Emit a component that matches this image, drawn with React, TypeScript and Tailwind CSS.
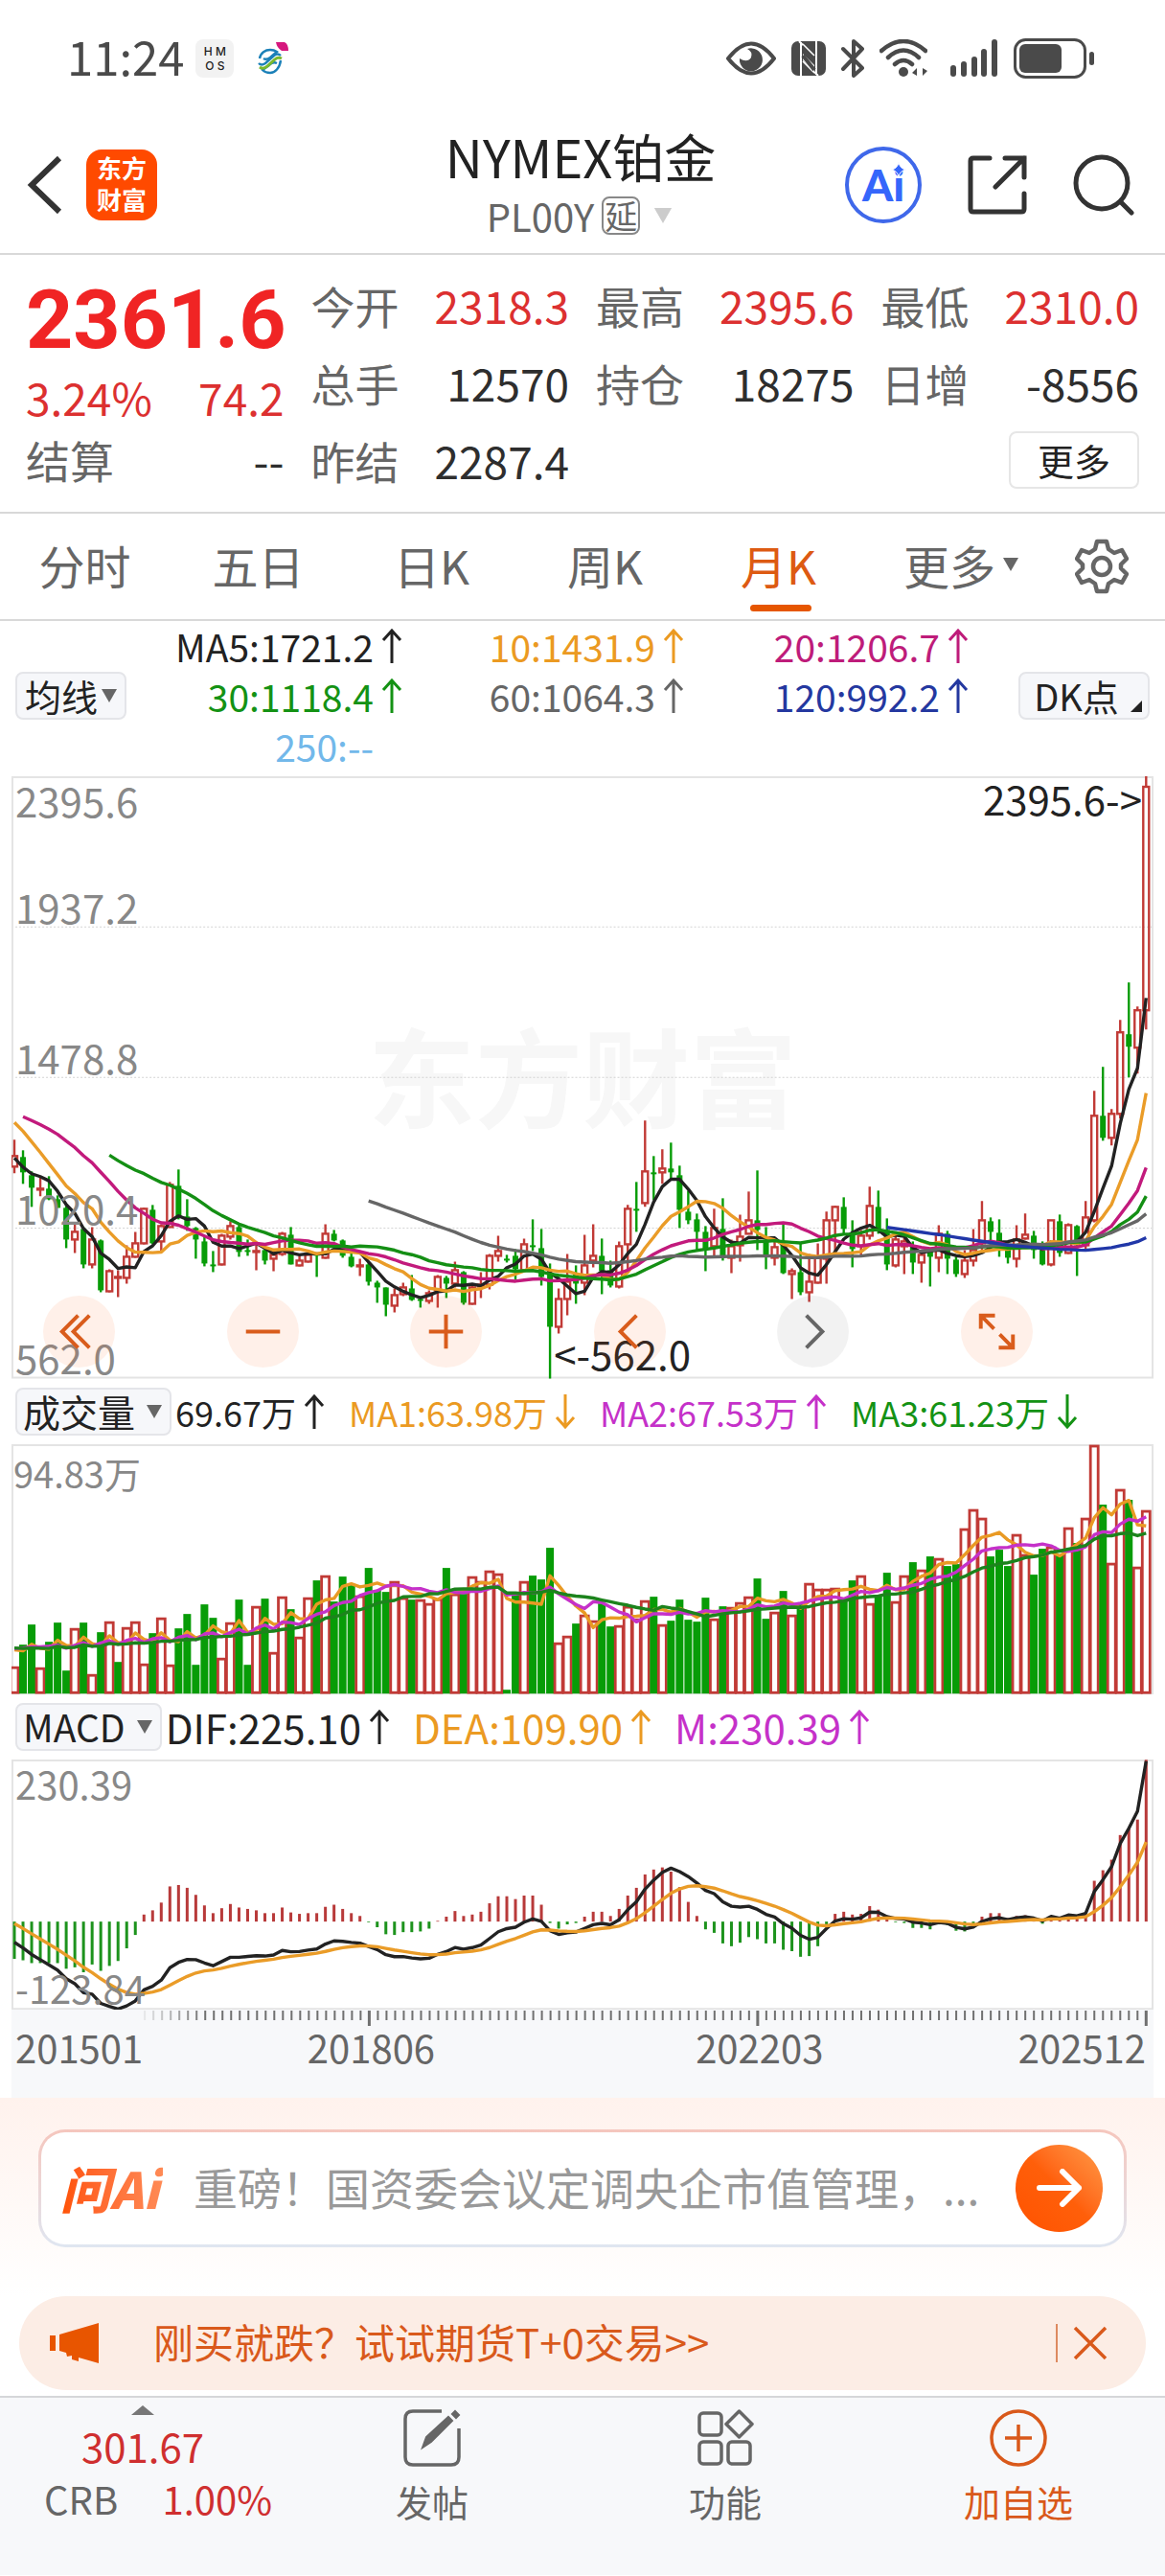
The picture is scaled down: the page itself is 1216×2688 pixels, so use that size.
import { ReactNode } from 'react';

type Candle = [high: number, top: number, bottom: number, low: number, kind: 'r' | 'g'];

const RED = '#c13a36';
const GREEN = '#079c07';

const STEP = 9.01;
const CHART_WIDTH = 1191;
const xAt = (i: number) => 3 + i * STEP;

// one candle per month, 201501 - 202512, in chart units from the top edge
const candles: Candle[] = [
  [379, 396, 407, 414, 'r'], [390, 397, 413, 425, 'g'], [412, 416, 429, 449, 'g'], [417, 430, 431, 438, 'r'],
  [417, 430, 441, 442, 'g'], [437, 441, 450, 450, 'g'], [448, 450, 483, 492, 'g'], [466, 475, 483, 497, 'r'],
  [470, 472, 509, 513, 'g'], [470, 483, 509, 513, 'r'], [483, 484, 536, 538, 'g'], [514, 516, 537, 538, 'r'],
  [515, 522, 523, 543, 'r'], [489, 501, 523, 529, 'r'], [475, 487, 501, 502, 'r'], [450, 451, 487, 488, 'r'],
  [447, 452, 487, 488, 'g'], [467, 469, 485, 495, 'r'], [423, 426, 470, 470, 'r'], [410, 427, 459, 462, 'g'],
  [441, 459, 469, 474, 'g'], [470, 471, 483, 503, 'g'], [480, 485, 508, 511, 'g'], [495, 509, 510, 517, 'g'],
  [477, 479, 509, 510, 'r'], [464, 469, 480, 483, 'r'], [468, 470, 496, 501, 'g'], [483, 494, 495, 500, 'g'],
  [487, 495, 496, 515, 'r'], [493, 494, 505, 509, 'g'], [495, 499, 503, 516, 'r'], [475, 477, 498, 500, 'r'],
  [470, 478, 509, 509, 'g'], [500, 505, 510, 511, 'r'], [498, 499, 506, 507, 'r'], [497, 498, 500, 522, 'g'],
  [467, 477, 502, 503, 'r'], [473, 477, 484, 485, 'g'], [483, 484, 500, 502, 'g'], [497, 501, 511, 512, 'g'],
  [503, 510, 511, 521, 'r'], [507, 509, 527, 531, 'g'], [526, 528, 533, 549, 'g'], [533, 533, 551, 563, 'g'],
  [534, 541, 552, 559, 'r'], [528, 533, 540, 542, 'r'], [520, 534, 546, 547, 'g'], [543, 545, 547, 554, 'g'],
  [536, 539, 547, 550, 'r'], [520, 522, 536, 554, 'r'], [521, 523, 529, 544, 'g'], [506, 515, 529, 533, 'r'],
  [516, 517, 549, 551, 'g'], [530, 533, 550, 551, 'r'], [517, 530, 532, 544, 'r'], [498, 500, 530, 535, 'r'],
  [479, 495, 500, 506, 'r'], [499, 503, 504, 507, 'g'], [493, 500, 514, 525, 'g'], [482, 488, 515, 516, 'r'],
  [462, 489, 490, 495, 'g'], [472, 492, 522, 531, 'g'], [508, 518, 574, 628, 'g'], [534, 545, 574, 581, 'r'],
  [498, 527, 545, 562, 'r'], [510, 518, 529, 550, 'g'], [478, 510, 528, 541, 'r'], [467, 500, 505, 512, 'r'],
  [482, 500, 516, 540, 'g'], [505, 515, 531, 533, 'g'], [485, 490, 532, 534, 'r'], [447, 451, 488, 515, 'r'],
  [423, 451, 452, 475, 'g'], [359, 412, 445, 449, 'r'], [396, 413, 415, 442, 'g'], [389, 409, 413, 425, 'r'],
  [382, 409, 413, 420, 'g'], [406, 416, 452, 471, 'g'], [432, 454, 463, 467, 'g'], [456, 462, 475, 494, 'g'],
  [469, 475, 493, 516, 'g'], [451, 471, 490, 500, 'r'], [440, 472, 500, 505, 'g'], [483, 490, 502, 518, 'r'],
  [457, 480, 489, 506, 'r'], [433, 463, 477, 477, 'r'], [411, 463, 473, 494, 'g'], [470, 483, 500, 514, 'g'],
  [483, 491, 502, 510, 'r'], [467, 488, 518, 519, 'g'], [513, 516, 519, 545, 'r'], [487, 517, 538, 541, 'g'],
  [498, 527, 538, 548, 'r'], [487, 502, 528, 529, 'r'], [454, 463, 503, 529, 'r'], [448, 449, 463, 496, 'r'],
  [439, 449, 472, 477, 'g'], [463, 476, 493, 512, 'g'], [473, 479, 490, 500, 'r'], [428, 448, 479, 483, 'r'],
  [432, 449, 473, 477, 'g'], [461, 473, 509, 515, 'g'], [479, 483, 510, 512, 'r'], [481, 485, 490, 519, 'r'],
  [485, 490, 507, 519, 'g'], [494, 499, 507, 528, 'r'], [492, 495, 501, 532, 'g'], [468, 477, 502, 517, 'r'],
  [474, 477, 503, 519, 'g'], [501, 504, 519, 522, 'g'], [494, 505, 519, 523, 'r'], [472, 494, 505, 511, 'r'],
  [443, 463, 487, 494, 'r'], [460, 464, 475, 490, 'g'], [462, 476, 492, 501, 'g'], [487, 492, 502, 508, 'g'],
  [468, 483, 503, 512, 'r'], [456, 478, 482, 483, 'r'], [474, 479, 494, 503, 'g'], [485, 494, 509, 510, 'g'],
  [463, 463, 509, 511, 'r'], [457, 464, 497, 501, 'g'], [466, 468, 497, 498, 'r'], [468, 469, 489, 521, 'g'],
  [443, 460, 489, 494, 'r'], [328, 354, 463, 465, 'r'], [303, 354, 377, 380, 'g'], [347, 352, 377, 385, 'r'],
  [254, 267, 352, 357, 'r'], [215, 269, 282, 314, 'g'], [240, 244, 283, 310, 'r'], [0, 11, 244, 264, 'r'],
];

// closes of the 18 months before the first visible one, the averages need them
const earlierCloses = [350, 345, 345, 345, 340, 340, 338, 337, 337, 322, 320, 318, 325, 335, 365, 395, 415, 419];

// monthly volume, negative = closed down
const volumes = [
  28, -51, -72, 27, -54, -74, -24, 68, -74, 20, -64, 75, -33, 69, 75, 31, -63, 79, 30, -68, -83, -30, -93, -79,
  37, 74, -98, -30, 91, -99, 43, 101, -88, 59, 100, -118, 123, -96, -122, -113, 102, -131, -108, -106, 117, 100,
  -98, 98, 94, 99, -131, 104, -104, 122, 117, 128, 125, -4, -103, 117, -123, -119, -152, 53, 60, -73, 82, 76,
  -94, -70, 71, 91, 78, 97, -101, 72, -76, -98, -77, -75, -100, 78, -91, 90, 95, 101, -120, -78, 85, -107, 82,
  -93, 115, 109, 109, 110, -99, -118, 123, 94, -103, -126, 96, 123, -137, 129, -143, 141, -133, -135, 172, 192,
  183, -143, -150, -133, 166, 145, -124, -151, 153, -145, 173, -157, 183, 259, -197, 136, 213, -202, 132, 191,
];

const earlierVolumes = [28, 60, 64, 30, 58, 34, 50, 62, 30, 44, 60, 26, 48, 62, 56, 38, 48, 58];

const macd = [
  -53, -55, -59, -59, -59, -59, -67, -65, -72, -61, -70, -63, -56, -38, -19, 10, 16, 27, 50, 52, 48, 38, 23, 12,
  19, 25, 20, 18, 16, 12, 12, 20, 13, 11, 12, 12, 21, 24, 18, 12, 8, -1, -8, -18, -19, -15, -15, -14, -10, 1, 7,
  15, 8, 10, 14, 26, 36, 36, 32, 37, 37, 24, -2, -10, -4, -2, 7, 14, 14, 8, 18, 37, 48, 67, 74, 77, 71, 49, 28,
  8, -11, -16, -31, -35, -30, -22, -25, -31, -31, -40, -42, -50, -49, -35, -8, 11, 14, 10, 11, 22, 17, 4, -1, -2,
  -9, -9, -11, -4, -5, -13, -14, -7, 7, 12, 12, 5, 8, 9, 4, -3, 8, 2, 9, 5, 10, 58, 73, 88, 123, 133, 145, 230,
];

const average = (history: number[], values: number[], n: number) => {
  const all = [...history, ...values];
  const points: [number, number][] = [];
  values.forEach((_, i) => {
    const end = i + history.length + 1;
    if (end < n) return;
    const part = all.slice(end - n, end);
    points.push([xAt(i), part.reduce((a, b) => a + b, 0) / n]);
  });
  return points;
};

const toPoints = (points: [number, number][]) =>
  points.map(([x, y]) => `${x.toFixed(1)},${y.toFixed(1)}`).join(' ');

const Line = ({ points, color }: { points: [number, number][]; color: string }) => (
  <polyline points={toPoints(points)} fill="none" stroke={color} strokeWidth="3.4" strokeLinejoin="round" />
);

const Frame = ({ height }: { height: number }) => (
  <rect x="1" y="1" width={CHART_WIDTH - 2} height={height - 2} fill="none" stroke="#e4e4e4" strokeWidth="2" />
);

const PriceChart = () => {
  const closes = candles.map(([, top, bottom, , kind]) => (kind === 'r' ? top : bottom));
  const lines = [
    { n: 5, color: '#222222' },
    { n: 10, color: '#ea9c28' },
    { n: 20, color: '#c21a7c' },
    { n: 30, color: '#148f14' },
    { n: 60, color: '#666666' },
    { n: 120, color: '#2137a8' },
  ];

  return (
    <svg viewBox="0 0 1191 628" className="relative block w-full">
      {[157, 314, 471].map((y) => (
        <line key={y} x1="0" x2="1191" y1={y} y2={y} stroke="#d4d4d4" strokeWidth="1" strokeDasharray="2 2" />
      ))}
      <Frame height={628} />
      {candles.map(([high, top, bottom, low, kind], i) => {
        const x = xAt(i);
        if (kind === 'g') {
          return (
            <g key={i} fill={GREEN}>
              <rect x={x - 1.2} y={high} width="2.4" height={low - high} />
              <rect x={x - 3} y={top} width="6" height={Math.max(bottom - top, 2)} />
            </g>
          );
        }
        return (
          <g key={i} fill="none" stroke={RED} strokeWidth="2.4">
            <path d={`M${x} ${high}V${top}M${x} ${bottom}V${low}`} />
            <rect x={x - 3} y={top} width="6" height={Math.max(bottom - top, 1)} />
          </g>
        );
      })}
      {lines.map(({ n, color }) => (
        <Line key={n} points={average(earlierCloses, closes, n)} color={color} />
      ))}
    </svg>
  );
};

const VolumeChart = () => {
  const sizes = volumes.map(Math.abs);
  const flip = (points: [number, number][]) => points.map(([x, y]): [number, number] => [x, 260 - y]);

  return (
    <svg viewBox="0 0 1191 261" className="block w-full">
      <Frame height={261} />
      {volumes.map((v, i) => {
        const h = Math.abs(v);
        return v < 0 ? (
          <rect key={i} x={xAt(i) - 4} y={260 - h} width="8" height={h} fill={GREEN} />
        ) : (
          <rect key={i} x={xAt(i) - 4} y={261 - h} width="8" height={h - 2} fill="#fff" stroke={RED} strokeWidth="2.8" />
        );
      })}
      <Line points={flip(average(earlierVolumes, sizes, 5))} color="#e99a24" />
      <Line points={flip(average(earlierVolumes, sizes, 10))} color="#c531c9" />
      <Line points={flip(average(earlierVolumes, sizes, 18))} color="#1c831c" />
    </svg>
  );
};

const MacdChart = () => {
  const zero = 169;
  const scale = 169 / 230.39;
  const dea: [number, number][] = [];
  const dif: [number, number][] = [];
  let signal = -3;
  macd.forEach((m, i) => {
    if (i > 0) signal += m / 8;
    dea.push([xAt(i), zero - signal * scale]);
    dif.push([xAt(i), zero - (signal + m / 2) * scale]);
  });

  return (
    <svg viewBox="0 0 1191 261" className="block w-full">
      <Frame height={261} />
      {macd.map((m, i) => {
        const h = Math.abs(m) * scale;
        return (
          <rect key={i} x={xAt(i) - 1.5} y={m > 0 ? zero - h : zero} width="3" height={h} fill={m > 0 ? '#b83a3a' : '#1d931d'} />
        );
      })}
      <Line points={dif} color="#222222" />
      <Line points={dea} color="#ea9c28" />
    </svg>
  );
};

const TimeTicks = () => (
  <svg viewBox="0 0 1191 18" className="block w-full">
    {macd.map((_, i) => {
      const major = i === 41 || i === 86 || i === 131;
      if (i < 15) return null;
      return (
        <rect
          key={i}
          x={xAt(i) - (major ? 1 : 0.5)}
          y="1"
          width={major ? 3 : 2}
          height={major ? 16 : 10}
          fill="#707070"
          opacity={Math.min(1, (i - 14) / 8)}
        />
      );
    })}
  </svg>
);

const Arrow = ({ down = false }: { down?: boolean }) => (
  <svg viewBox="0 0 22 36" fill="none" stroke="currentColor" strokeWidth="3" className="ml-2 h-9 w-[22px] shrink-0">
    <path d={down ? 'M11 0V34M2 24L11 34L20 24' : 'M11 36V2M2 12L11 2L20 12'} />
  </svg>
);

const Caret = ({ className }: { className: string }) => (
  <svg viewBox="0 0 16 14" fill="currentColor" className={className}>
    <path d="M0 0H16L8 14Z" />
  </svg>
);

const StatusBar = () => (
  <div className="flex h-[122px] items-center pl-[70px] pr-[74px] text-[#4a4a4a]">
    <span className="pb-1.5 text-[49px] leading-[60px]">11:24</span>
    <div className="ml-3 flex h-10 w-10 flex-col items-center justify-center rounded-lg bg-[#f2f2f2] font-['Inter',sans-serif] text-[12px] font-medium leading-[15px] text-[#222]">
      <span>H M</span>
      <span>O S</span>
    </div>
    <svg viewBox="0 0 34 34" className="ml-6 h-[34px] w-[34px]" fill="none" strokeWidth="2.4">
      <g stroke="#1b80b8">
        <path d="M3 17C4 11 9 8 14 8Q18 8 21 10L14 16Q10 19 7 17" />
        <path d="M2 22Q5 25 9 22L18 14Q22 11 25 14" />
        <path d="M25 19C24 27 19 32 14 32Q9 32 6 29L13 24Q17 20 21 22" />
      </g>
      <path d="M3 26Q7 29 11 25L19 18Q22 15 26 17" stroke="#7ab92e" strokeWidth="3" />
      <path d="M20 0L29 0Q33 2 33 9L26 9Q21 6 20 0Z" fill="#d6187e" />
    </svg>

    <div className="ml-auto flex items-center gap-4">
      <svg viewBox="0 0 52 36" className="h-9 w-[52px]" fill="none" stroke="currentColor" strokeWidth="4">
        <path d="M2 18Q26 -13 50 18Q26 49 2 18Z" strokeLinejoin="round" />
        <path d="M22 8A12 12 0 1 1 14 18Q22 23 26 17Q28 11 22 8Z" fill="currentColor" stroke="none" />
      </svg>
      <svg viewBox="0 0 36 36" className="h-9 w-9">
        <rect width="36" height="36" rx="7" fill="currentColor" />
        <path d="M10 36V1M26 35V0M8 0L12 4M24 32L28 36" fill="none" stroke="#fff" strokeWidth="2" />
        <path d="M12 13L24 25V33L12 20Z" fill="#fff" stroke="none" />
        <path d="M12 21L24 33M12 3L24 15" stroke="#fff" strokeWidth="1.5" />
        <path d="M12 15L24 30" stroke="currentColor" strokeWidth="4" />
      </svg>
      <svg viewBox="0 0 24 40" className="h-10 w-6" fill="none" stroke="currentColor" strokeWidth="4" strokeLinejoin="round" strokeLinecap="round">
        <path d="M2 10L22 30L13 38V2L22 10L2 31" />
      </svg>
      <svg viewBox="0 0 50 40" className="h-10 w-[50px]" fill="none" stroke="currentColor" strokeWidth="4.5" strokeLinecap="round">
        <path d="M2 12Q25 -8 48 12M9 19Q25 4 41 19M16 26Q25 18 34 26" />
        <circle cx="25" cy="34" r="5" fill="currentColor" stroke="none" />
        <path d="M34 35L39 30V38ZM50 33L45 38V30Z" fill="currentColor" stroke="none" />
      </svg>
      <svg viewBox="0 0 50 40" className="ml-2 h-10 w-[50px]" fill="currentColor">
        <rect x="0" y="27" width="6" height="12" rx="3" />
        <rect x="11" y="23" width="6" height="16" rx="3" />
        <rect x="22" y="18" width="6" height="21" rx="3" />
        <rect x="32" y="10" width="6" height="29" rx="3" />
        <rect x="43" y="0" width="6" height="39" rx="3" />
      </svg>
      <svg viewBox="0 0 84 42" className="h-[42px] w-[84px]" fill="currentColor">
        <rect x="1.5" y="1.5" width="73" height="39" rx="11" fill="none" stroke="currentColor" strokeWidth="3" />
        <rect x="6" y="6" width="44" height="30" rx="6" />
        <rect x="79" y="14" width="5" height="14" rx="2.5" />
      </svg>
    </div>
  </div>
);

const Header = () => (
  <header className="grid h-[144px] grid-cols-[1fr_auto_1fr] items-center border-b-2 border-[#d8d8d8] pl-7 pr-8">
    <div className="flex items-center gap-6">
      <button aria-label="返回">
        <svg viewBox="0 0 38 60" className="h-[60px] w-[38px]" fill="none" stroke="#333" strokeWidth="6">
          <path d="M34 2L5 30L34 58" />
        </svg>
      </button>
      <div className="flex h-[74px] w-[74px] flex-col items-center justify-center rounded-2xl bg-[#ff4a00] pb-1 text-[26px] font-bold leading-[33px] text-white">
        <span>东方</span>
        <span>财富</span>
      </div>
    </div>
    <div className="text-center">
      <h1 className="text-[54px] leading-[64px] text-[#222]">NYMEX铂金</h1>
      <button className="flex w-full items-center justify-center text-[40px] leading-[60px] text-[#666]">
        PL00Y
        <span className="ml-2 rounded-lg border-2 border-[#888] px-px text-[34px] leading-9">延</span>
        <Caret className="ml-3 h-4 w-6 text-[#ccc]" />
      </button>
    </div>
    <div className="flex items-center justify-end gap-12">
      <button className="relative flex h-20 w-20 items-center justify-center rounded-full border-4 border-[#3f68ea] font-['Lato',sans-serif] text-[46px] font-black leading-none text-[#3566fb]">
        Ai
        <svg viewBox="0 0 16 16" className="absolute right-3 top-3 h-4 w-4" fill="#3566fb" stroke="#fff" strokeWidth="1">
          <path d="M8 0Q9 7 16 8Q9 9 8 16Q7 9 0 8Q7 7 8 0Z" />
        </svg>
      </button>
      <button aria-label="分享">
        <svg viewBox="0 0 62 62" className="h-[62px] w-[62px]" fill="none" stroke="#333" strokeWidth="5" strokeLinecap="round">
          <path d="M23 3H6Q3 3 3 6V56Q3 59 6 59H56Q59 59 59 56V40M39 3H59V23M59 3L29 33" />
        </svg>
      </button>
      <button aria-label="搜索">
        <svg viewBox="0 0 64 64" className="h-16 w-16" fill="none" stroke="#333" strokeWidth="5" strokeLinecap="round">
          <circle cx="30" cy="30" r="27" />
          <path d="M50 50L61 61" />
        </svg>
      </button>
    </div>
  </header>
);

const Quote = ({ label, value, tone = 'text-[#2e2e2e]' }: { label: string; value: string; tone?: string }) => (
  <div className="flex h-[81px] items-center justify-between text-[46px] leading-[56px]">
    <span className="text-[#666]">{label}</span>
    <span className={tone}>{value}</span>
  </div>
);

const QuotePanel = () => (
  <section className="grid grid-cols-4 gap-7 border-b-2 border-[#d8d8d8] px-[27px] pb-3.5 pt-[11px]">
    <div>
      <div className="flex h-[113px] items-center font-['Roboto',sans-serif] text-[86px] font-bold leading-none text-[#f02424]">2361.6</div>
      <div className="flex h-12 items-center justify-between text-[46px] leading-none text-[#dc3030]">
        <span>3.24%</span>
        <span>74.2</span>
      </div>
      <Quote label="结算" value="--" />
    </div>
    <div>
      <Quote label="今开" value="2318.3" tone="text-[#dc3030]" />
      <Quote label="总手" value="12570" />
      <Quote label="昨结" value="2287.4" />
    </div>
    <div>
      <Quote label="最高" value="2395.6" tone="text-[#dc3030]" />
      <Quote label="持仓" value="18275" />
    </div>
    <div>
      <Quote label="最低" value="2310.0" tone="text-[#dc3030]" />
      <Quote label="日增" value="-8556" />
      <div className="flex h-[81px] items-center justify-end">
        <button className="rounded-lg border-2 border-[#e6e6e6] px-7 text-[38px] leading-[56px] text-[#222]">更多</button>
      </div>
    </div>
  </section>
);

const PeriodTabs = () => (
  <nav className="grid h-[112px] grid-cols-[181fr_181fr_181fr_181fr_181fr_200fr_111fr] border-b-2 border-[#d8d8d8] text-[48px] leading-[60px] text-[#666]">
    {['分时', '五日', '日K', '周K', '月K'].map((tab) => (
      <button key={tab} className={tab === '月K' ? 'relative pb-1 pr-1 text-[#dd5a12]' : 'relative pb-1 pr-1'}>
        {tab}
        {tab === '月K' && <span className="absolute bottom-2 left-1/2 h-[7px] w-16 -translate-x-1/2 rounded-full bg-[#e65600]" />}
      </button>
    ))}
    <button className="flex items-center justify-center pb-1 pr-1">
      更多
      <Caret className="ml-2 h-3.5 w-4" />
    </button>
    <button aria-label="设置" className="flex items-center pl-[17px]">
      <svg viewBox="0 0 56 58" className="h-[58px] w-14" fill="none" stroke="#666" strokeWidth="4.5" strokeLinejoin="round">
        <path d="M23 3H33L35 11L41 15L49 12L54 21L48 27V31L54 37L49 46L41 43L35 47L33 55H23L21 47L15 43L7 46L2 37L8 31V27L2 21L7 12L15 15L21 11Z" />
        <circle cx="28" cy="29" r="9" />
      </svg>
    </button>
  </nav>
);

const averages = [
  { text: 'MA5:1721.2', tone: 'text-[#222]' },
  { text: '10:1431.9', tone: 'text-[#eb9a22]' },
  { text: '20:1206.7', tone: 'text-[#be1c7a]' },
  { text: '30:1118.4', tone: 'text-[#149214]' },
  { text: '60:1064.3', tone: 'text-[#666]' },
  { text: '120:992.2', tone: 'text-[#2438a0]' },
  { text: '250:--', tone: 'pr-[30px] text-[#72b8ea]' },
];

const AverageLegend = () => (
  <div className="flex items-center pb-1.5 pl-4 pr-4">
    <button className="flex h-[50px] w-[116px] items-center justify-center rounded-lg border-2 border-[#e4e5e9] bg-[#f6f7fa] text-[38px] leading-none text-[#222]">
      均线
      <Caret className="ml-1 h-3.5 w-4 text-[#666]" />
    </button>
    <div className="grid flex-1 grid-cols-[288fr_294fr_297fr] text-[39px] leading-[52px]">
      {averages.map(({ text, tone }) => (
        <div key={text} className={`flex h-[52px] items-center justify-end ${tone}`}>
          {text}
          {text !== '250:--' && <Arrow />}
        </div>
      ))}
    </div>
    <button className="relative ml-[52px] h-[50px] w-[137px] rounded-lg border-2 border-[#e4e5e9] bg-[#f6f7fa] pr-4 text-[38px] leading-[44px] text-[#222]">
      DK点
      <svg viewBox="0 0 12 12" className="absolute bottom-1.5 right-1.5 h-3 w-3" fill="#222">
        <path d="M12 0V12H0Z" />
      </svg>
    </button>
  </div>
);

const controls: { label: string; path: string; muted?: boolean }[] = [
  { label: '最左', path: 'M37 21L20 38L37 55M49 21L32 38L49 55' },
  { label: '缩小', path: 'M20 38H56' },
  { label: '放大', path: 'M20 38H56M38 20V56' },
  { label: '左移', path: 'M45 21L28 38L45 55' },
  { label: '右移', path: 'M31 21L48 38L31 55', muted: true },
  { label: '全屏', path: 'M21 35V21H36M21 21L35 35M55 41V55H40M55 55L41 41' },
];

const AxisLabel = ({ className, children }: { className: string; children: ReactNode }) => (
  <span className={`absolute left-1 text-[#888] ${className}`}>{children}</span>
);

const PriceSection = () => (
  <section className="relative mx-3 text-[42px] leading-[42px]">
    <div className="absolute inset-0 flex items-center justify-center pb-2 text-[112px] font-bold leading-none text-[#f7f7f7]">
      东方财富
    </div>
    <PriceChart />
    <AxisLabel className="top-1">2395.6</AxisLabel>
    <AxisLabel className="top-1/4 -translate-y-full">1937.2</AxisLabel>
    <AxisLabel className="top-1/2 -translate-y-full">1478.8</AxisLabel>
    <AxisLabel className="top-3/4 -translate-y-full">1020.4</AxisLabel>
    <AxisLabel className="bottom-0.5">562.0</AxisLabel>
    <span className="absolute right-3 top-0.5 text-[#222]">2395.6-&gt;</span>
    <span className="absolute bottom-1.5 left-[47.5%] text-[#222]">&lt;-562.0</span>
    <div className="absolute bottom-3 left-[33px] right-[126px] flex justify-between">
      {controls.map(({ label, path, muted }) => (
        <button
          key={label}
          aria-label={label}
          className={muted ? 'rounded-full bg-black/5 text-[#666]' : 'rounded-full bg-[#ff6a20]/10 text-[#d95c1c]'}
        >
          <svg viewBox="0 0 76 76" className="h-[75px] w-[75px]" fill="none" stroke="currentColor" strokeWidth="4">
            <path d={path} />
          </svg>
        </button>
      ))}
    </div>
  </section>
);

const IndicatorButton = ({ children }: { children: ReactNode }) => (
  <button className="mr-1 flex h-[50px] items-center gap-3 rounded-lg border-2 border-[#e4e5e9] bg-[#f6f7fa] pl-1.5 pr-2 text-[39px] leading-none text-[#222]">
    {children}
    <Caret className="h-3.5 w-4 text-[#666]" />
  </button>
);

const VolumeSection = () => (
  <section className="mx-3 text-[36px] leading-[40px]">
    <div className="flex h-[68px] items-center gap-[25px] pl-1">
      <div className="flex items-center text-[#222]">
        <IndicatorButton>成交量</IndicatorButton>
        69.67万
        <Arrow />
      </div>
      <div className="flex items-center text-[#eb9a22]">MA1:63.98万<Arrow down /></div>
      <div className="flex items-center text-[#c531c9]">MA2:67.53万<Arrow /></div>
      <div className="flex items-center text-[#149214]">MA3:61.23万<Arrow down /></div>
    </div>
    <div className="relative">
      <VolumeChart />
      <span className="absolute left-0.5 top-2.5 text-[38px] text-[#888]">94.83万</span>
    </div>
  </section>
);

const MacdSection = () => (
  <section className="mx-3 text-[40px] leading-[42px]">
    <div className="flex h-[68px] items-center gap-6 pl-1 text-[42px]">
      <div className="flex items-center text-[#222]">
        <IndicatorButton>MACD</IndicatorButton>
        DIF:225.10
        <Arrow />
      </div>
      <div className="flex items-center text-[#eb9a22]">DEA:109.90<Arrow /></div>
      <div className="flex items-center text-[#c531c9]">M:230.39<Arrow /></div>
    </div>
    <div className="relative">
      <MacdChart />
      <AxisLabel className="top-1">230.39</AxisLabel>
      <AxisLabel className="bottom-0.5">-123.84</AxisLabel>
    </div>
    <div className="bg-[#f7f8fa] pb-8 text-[#666]">
      <TimeTicks />
      <div className="relative flex justify-between pl-1 pr-2">
        <span>201501</span>
        <span className="absolute left-[31.5%] -translate-x-1/2">201806</span>
        <span className="absolute left-[65.5%] -translate-x-1/2">202203</span>
        <span>202512</span>
      </div>
    </div>
  </section>
);

const AskAi = () => (
  <section className="bg-linear-to-b from-[#fff2ed] to-white px-10 pb-[51px] pt-[33px]">
    <div className="rounded-[28px] bg-linear-to-b from-[#f5c6bd] to-[#dfe6f1] p-[3px]">
      <div className="flex h-[117px] items-center rounded-[25px] bg-white pl-5 pr-[22px]">
        <span className="bg-linear-to-r from-[#ff5200] to-[#ff8a55] bg-clip-text pr-1 text-[52px] font-black italic leading-[60px] text-transparent">
          问Ai
        </span>
        <input
          aria-label="问Ai"
          placeholder="重磅！国资委会议定调央企市值管理，..."
          className="ml-8 min-w-0 flex-1 pb-1 text-[46px] leading-[60px] outline-none placeholder:text-[#999]"
        />
        <button aria-label="发送" className="flex h-[91px] w-[91px] items-center justify-center rounded-full bg-linear-to-bl from-[#ff9a45] via-[#ff5f0a] to-[#ff5200]">
          <svg viewBox="0 0 48 40" className="h-10 w-12" fill="none" stroke="#fff" strokeWidth="6" strokeLinecap="round" strokeLinejoin="round">
            <path d="M3 20H44M27 3L44 20L27 37" />
          </svg>
        </button>
      </div>
    </div>
  </section>
);

const Banner = () => (
  <div className="mx-5 mb-1.5 flex h-[98px] items-center rounded-full bg-[#fcede5] pl-8 pr-10 text-[#d9591b]">
    <svg viewBox="0 0 52 42" className="h-[42px] w-[52px]" fill="#e85500">
      <path d="M0 13H6V29H0ZM10 12L51 0V42L30 36V40L23 38V34L18 35L17 31L10 29Z" />
    </svg>
    <a href="#trade" className="ml-14 pb-1 text-[42px] leading-[56px]">刚买就跌？试试期货T+0交易&gt;&gt;</a>
    <span className="ml-auto h-10 w-0.5 bg-[#dd8a60]" />
    <button aria-label="关闭" className="ml-4">
      <svg viewBox="0 0 36 36" className="h-9 w-9" fill="none" stroke="currentColor" strokeWidth="3.5">
        <path d="M2 2L34 34M34 2L2 34" />
      </svg>
    </button>
  </div>
);

const BottomBar = () => (
  <footer className="flex h-[187px] border-t-2 border-[#d5d6d9] bg-[#f7f8fa] text-[38px] leading-[52px] text-[#666]">
    <div className="flex w-[298px] flex-col items-center pt-2">
      <svg viewBox="0 0 24 10" className="h-2.5 w-6" fill="#777">
        <path d="M12 0L24 10H0Z" />
      </svg>
      <span className="mt-1 text-[42px] leading-[56px] text-[#cf2f2f]">301.67</span>
      <div className="flex w-full justify-between pl-[46px] pr-3.5 text-[40px] leading-[54px]">
        CRB
        <span className="text-[#cf2f2f]">1.00%</span>
      </div>
    </div>
    <button className="flex flex-1 flex-col items-center pt-3">
      <svg viewBox="0 0 60 60" className="mb-2.5 h-[60px] w-[60px]" fill="none" stroke="currentColor" strokeWidth="3.5">
        <path d="M40 2H10Q2 2 2 10V50Q2 58 10 58H50Q58 58 58 50V20" />
        <path d="M20 40L24 29L47 8L51 12L29 34ZM51 5L54 2L58 6L55 9Z" fill="currentColor" strokeWidth="2" />
      </svg>
      发帖
    </button>
    <button className="flex flex-1 flex-col items-center pt-3">
      <svg viewBox="0 0 60 60" className="mb-2.5 h-[60px] w-[60px]" fill="none" stroke="currentColor" strokeWidth="3.5" strokeLinejoin="round">
        <rect x="3" y="4" width="23" height="23" rx="4" />
        <rect x="3" y="34" width="23" height="23" rx="4" />
        <rect x="33" y="34" width="23" height="23" rx="4" />
        <path d="M44.500 2L58 15.500L44.500 29L31 15.500Z" />
      </svg>
      功能
    </button>
    <button className="flex flex-1 flex-col items-center pt-3 text-[#d9591b]">
      <svg viewBox="0 0 60 60" className="mb-2.5 h-[60px] w-[60px]" fill="none" stroke="currentColor" strokeWidth="3.5">
        <circle cx="30" cy="30" r="28" />
        <path d="M30 16V44M16 30H44" />
      </svg>
      加自选
    </button>
  </footer>
);

export default function App() {
  return (
    <div className="min-h-screen bg-white font-['Noto_Sans_CJK_SC',sans-serif]">
      <StatusBar />
      <Header />
      <QuotePanel />
      <PeriodTabs />
      <AverageLegend />
      <PriceSection />
      <VolumeSection />
      <MacdSection />
      <AskAi />
      <Banner />
      <BottomBar />
    </div>
  );
}
